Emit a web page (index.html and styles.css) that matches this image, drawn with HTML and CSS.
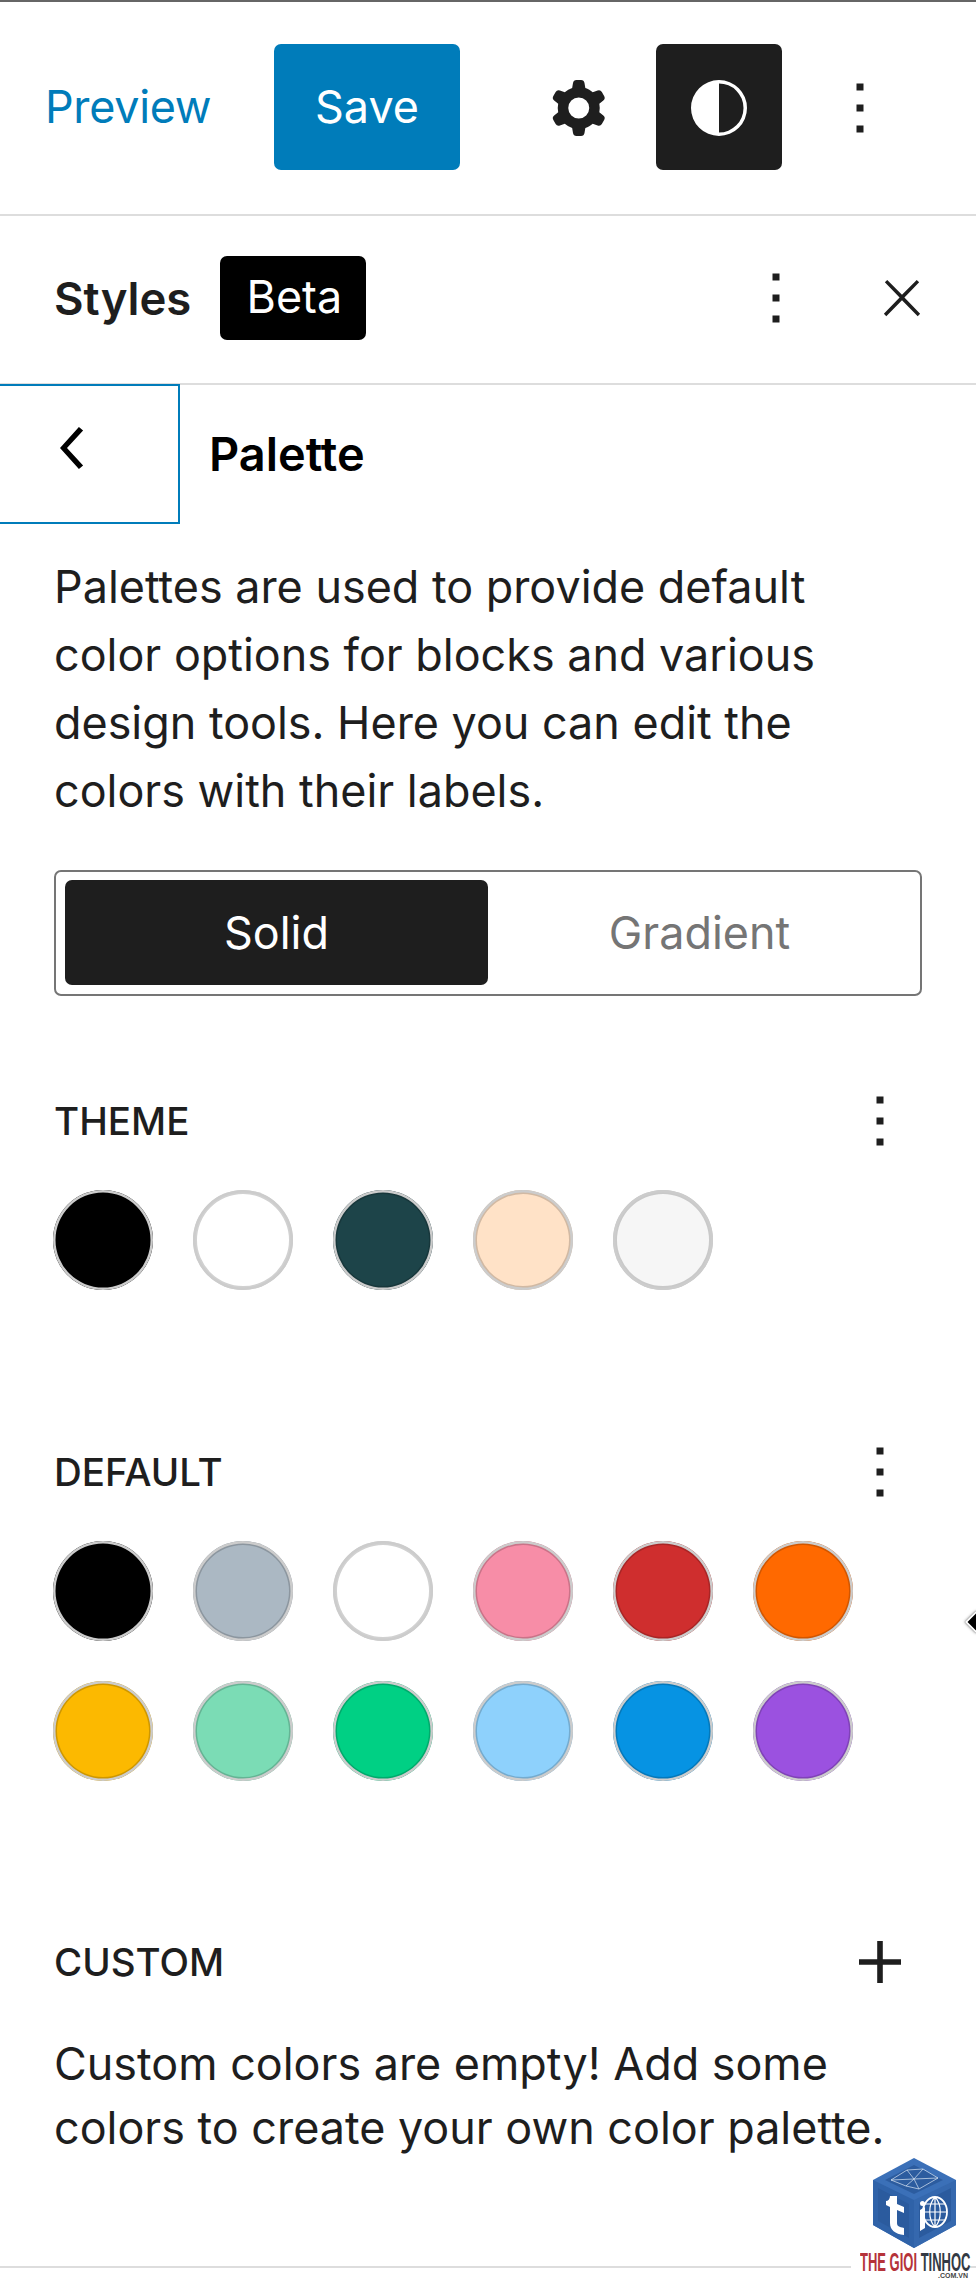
FILE: index.html
```html
<!DOCTYPE html>
<html lang="en">
<head>
<meta charset="utf-8">
<title>Palette</title>
<link rel="stylesheet" href="styles.css">
</head>
<body>
<div class="page">
  <header class="topbar">
    <a class="preview">Preview</a>
    <button class="save">Save</button>
    <span class="icon-btn gear"><svg viewBox="0 0 24 24" class="ic"><path fill-rule="evenodd" d="M10.289 4.836A1 1 0 0 1 11.275 4h1.306a1 1 0 0 1 .987.836l.244 1.466c.787.26 1.503.679 2.108 1.218l1.393-.522a1 1 0 0 1 1.216.437l.653 1.13a1 1 0 0 1-.23 1.273l-1.148.944a6.025 6.025 0 0 1 0 2.435l1.149.946a1 1 0 0 1 .23 1.272l-.653 1.13a1 1 0 0 1-1.216.437l-1.394-.522c-.605.54-1.32.958-2.108 1.218l-.244 1.466a1 1 0 0 1-.987.836h-1.306a1 1 0 0 1-.986-.836l-.244-1.466a5.995 5.995 0 0 1-2.108-1.218l-1.394.522a1 1 0 0 1-1.217-.436l-.653-1.131a1 1 0 0 1 .23-1.272l1.149-.946a6.026 6.026 0 0 1 0-2.435l-1.148-.944a1 1 0 0 1-.23-1.272l.653-1.131a1 1 0 0 1 1.217-.437l1.393.522a5.994 5.994 0 0 1 2.108-1.218l.244-1.466zM14.929 12a3 3 0 1 1-6 0 3 3 0 0 1 6 0z"/></svg></span>
    <span class="icon-btn styles-btn"><svg viewBox="0 0 24 24" class="ic"><path fill-rule="evenodd" d="M20 12a8 8 0 1 1-16 0 8 8 0 0 1 16 0Zm-1 0a7 7 0 0 1-7 7V5a7 7 0 0 1 7 7Z"/></svg></span>
    <span class="icon-btn more-top"><svg viewBox="0 0 24 24" class="ic"><path d="M13 19h-2v-2h2v2zm0-6h-2v-2h2v2zm0-6h-2V5h2v2z"/></svg></span>
  </header>

  <div class="sidebar-head">
    <strong class="sidebar-title">Styles</strong>
    <span class="beta">Beta</span>
    <span class="icon-btn more-head"><svg viewBox="0 0 24 24" class="ic"><path d="M13 19h-2v-2h2v2zm0-6h-2v-2h2v2zm0-6h-2V5h2v2z"/></svg></span>
    <span class="icon-btn close"><svg viewBox="0 0 24 24" class="ic ic-small"><path d="M13 11.8l6.1-6.3-1-1-6.1 6.2-6.1-6.2-1 1 6.1 6.3-6.5 6.7 1 1 6.5-6.6 6.5 6.6 1-1z"/></svg></span>
  </div>

  <div class="nav">
    <span class="back"><svg viewBox="0 0 24 24" class="ic"><path d="M14.6 7l-1.2-1L8 12l5.4 6 1.2-1-4.6-5z"/></svg></span>
    <h2 class="nav-title">Palette</h2>
  </div>

  <p class="intro">Palettes are used to provide default color options for blocks and various design tools. Here you can edit the colors with their labels.</p>

  <div class="segment">
    <span class="seg-item active">Solid</span>
    <span class="seg-item">Gradient</span>
  </div>

  <section class="group group-theme">
    <div class="group-head">
      <h3 class="label">Theme</h3>
      <span class="icon-btn"><svg viewBox="0 0 24 24" class="ic"><path d="M13 19h-2v-2h2v2zm0-6h-2v-2h2v2zm0-6h-2V5h2v2z"/></svg></span>
    </div>
    <div class="swatches">
      <span class="swatch c-black"></span>
      <span class="swatch c-white"></span>
      <span class="swatch c-teal"></span>
      <span class="swatch c-peach"></span>
      <span class="swatch c-smoke"></span>
    </div>
  </section>

  <section class="group group-default">
    <div class="group-head">
      <h3 class="label">Default</h3>
      <span class="icon-btn"><svg viewBox="0 0 24 24" class="ic"><path d="M13 19h-2v-2h2v2zm0-6h-2v-2h2v2zm0-6h-2V5h2v2z"/></svg></span>
    </div>
    <div class="swatches">
      <span class="swatch c-black"></span>
      <span class="swatch c-gray"></span>
      <span class="swatch c-white"></span>
      <span class="swatch c-pink"></span>
      <span class="swatch c-red"></span>
      <span class="swatch c-orange"></span>
      <span class="swatch c-amber"></span>
      <span class="swatch c-mint"></span>
      <span class="swatch c-green"></span>
      <span class="swatch c-sky"></span>
      <span class="swatch c-blue"></span>
      <span class="swatch c-purple"></span>
    </div>
  </section>

  <section class="group group-custom">
    <div class="group-head">
      <h3 class="label">Custom</h3>
      <span class="icon-btn"><svg viewBox="0 0 24 24" class="ic"><path d="M18 11.2h-5.2V6h-1.6v5.2H6v1.6h5.2V18h1.6v-5.2H18z"/></svg></span>
    </div>
    <p class="empty">Custom colors are empty! Add some colors to create your own color palette.</p>
  </section>

  <div class="foot-line"></div>

  <span class="cursor"></span>

  <div class="logo">
    <svg class="cube" viewBox="0 0 84 90">
      <path fill="#3b70b8" d="M41 0 83 22V67L41 90 0 67V22Z"/>
      <path fill="#3568ae" d="M41 42 83 22V67L41 90Z"/>
      <path fill="#2f62a8" d="M41 42 0 22V67L41 90Z"/>
      <path fill="#2c5c9f" d="M41 7 70 22 41 36 12 22Z"/>
      <path fill="#2b5b9e" d="M5 30 36 46V80L5 63Z"/>
      <path fill="#2b5b9e" d="M78 30 46 46V80L78 63Z"/>
      <path fill="none" stroke="#dbe7f4" stroke-width=".7" d="M18 22 34 12 50 11 65 20 46 31 33 28ZM34 12 41 21 33 28M50 11 41 21 46 31M18 22 41 21 65 20"/>
      <path fill="#fff" d="M17 38h7v8l7 3v6l-7-3v13c0 3 2 4 7 5v7c-9-1-14-5-14-12V49l-4-2v-4c2 0 4-2 4-5Z"/>
      <ellipse cx="62" cy="54" rx="12" ry="15" fill="none" stroke="#fff" stroke-width="1.8"/>
      <path fill="none" stroke="#fff" stroke-width="1.2" d="M62 39V69M50 54H74M52 46H72M52 62H72M62 39C55 46 55 62 62 69M62 39C69 46 69 62 62 69"/>
      <path fill="#fff" d="M47 52l5-3v21l-5 3ZM47 45.500a2.500 2.500 0 1 0 5 0 2.500 2.500 0 1 0-5 0Z"/>
    </svg>
    <div class="logo-text"><span class="logo-red">THE GIOI</span> <span class="logo-blue">TINHOC</span></div>
    <div class="logo-sub">.COM.VN</div>
  </div>
</div>
</body>
</html>
```
FILE: styles.css
```css
* { box-sizing: border-box; }
html, body { margin: 0; padding: 0; background: #fff; }
.page {
  position: relative;
  width: 976px;
  height: 2280px;
  overflow: hidden;
  font-family: Inter, "Liberation Sans", sans-serif;
  font-size: 44.9px;
  color: #1e1e1e;
}
.ic { display: block; width: 84px; height: 84px; fill: currentColor; }
.ic-small { width: 58px; height: 58px; }
.icon-btn { display: block; flex: none; }

.topbar {
  display: flex;
  align-items: center;
  height: 216px;
  border-top: 2px solid #666;
  border-bottom: 2px solid #ddd;
  padding: 0 0 2px 45px;
}
.preview { width: 229px; color: #007cba; letter-spacing: -.3px; }
.save {
  width: 186px;
  height: 126px;
  border: 0;
  border-radius: 7px;
  background: #007cba;
  color: #fff;
  font: inherit;
  padding: 0;
}
.gear { margin: 2px 0 0 77px; }
.styles-btn {
  display: flex;
  align-items: center;
  justify-content: center;
  width: 126px;
  height: 126px;
  margin-left: 35px;
  padding-top: 2px;
  border-radius: 7px;
  background: #1e1e1e;
  color: #fff;
}
.more-top { margin: 2px 0 0 36px; }

.sidebar-head {
  display: flex;
  align-items: center;
  height: 169px;
  border-bottom: 2px solid #ddd;
  padding: 0 0 3px 54px;
}
.sidebar-title { font-weight: 600; font-size: 45.5px; }
.beta {
  display: flex;
  align-items: center;
  justify-content: center;
  width: 146px;
  height: 84px;
  margin-left: 29px;
  padding: 0 0 2px 2px;
  border-radius: 7px;
  background: #000;
  color: #fff;
}
.more-head { margin-left: auto; }
.close { margin-left: 55px; margin-right: 45px; }

.nav { display: flex; align-items: center; height: 139px; }
.back {
  display: block;
  flex: none;
  align-self: flex-end;
  width: 180px;
  height: 140px;
  padding: 20px 0 0 32px;
  border: 2px solid #007cba;
  border-left: 0;
  color: #000;
}
.nav-title { margin: 0 0 2px 29px; font-size: 46.9px; font-weight: 600; color: #000; }

.intro {
  margin: 29px 0 0;
  padding: 0 54px;
  line-height: 68px;
}

.segment {
  display: flex;
  width: 868px;
  height: 126px;
  margin: 45px 0 0 54px;
  padding: 8px 9px 9px;
  border: 2px solid #757575;
  border-radius: 7px;
}
.seg-item {
  display: flex;
  align-items: center;
  justify-content: center;
  flex: 1;
  color: #757575;
}
.seg-item.active { background: #1e1e1e; border-radius: 7px; color: #fff; }

.group { padding: 0 0 0 54px; }
.group-theme { margin-top: 83px; }
.group-default { margin-top: 140px; }
.group-custom { margin-top: 139px; }
.group-head {
  display: flex;
  align-items: center;
  justify-content: space-between;
  width: 868px;
  height: 84px;
}
.label {
  margin: 0;
  font-size: 38.5px;
  font-weight: 500;
  text-transform: uppercase;
}
.swatches {
  display: grid;
  grid-template-columns: repeat(6, 100px);
  gap: 40px;
  margin: 27px 0 0 -1px;
}
.swatch {
  display: block;
  width: 100px;
  height: 100px;
  border-radius: 50%;
  box-shadow: inset 0 0 0 2.500px #ccc, inset 0 0 0 4px rgba(0,0,0,.18);
}
.c-black { background: #000; }
.c-white { background: #fff; }
.c-teal { background: #1d4449; }
.c-peach { background: #ffe2c7; }
.c-smoke { background: #f6f6f6; }
.c-gray { background: #abb8c3; }
.c-pink { background: #f78da7; }
.c-red { background: #cf2e2e; }
.c-orange { background: #ff6900; }
.c-amber { background: #fcb900; }
.c-mint { background: #7bdcb5; }
.c-green { background: #00d084; }
.c-sky { background: #8ed1fc; }
.c-blue { background: #0693e3; }
.c-purple { background: #9b51e0; }

.empty { margin: 28px 0 0; width: 868px; line-height: 64px; }

.foot-line {
  position: absolute;
  left: 0;
  right: 0;
  top: 2266px;
  height: 2px;
  background: #ddd;
}
.cursor {
  position: absolute;
  left: 968px;
  top: 1614px;
  width: 16px;
  height: 16px;
  background: #000;
  border: 2px solid #fff;
  transform: rotate(45deg);
  box-shadow: 0 0 3px rgba(0,0,0,.5);
}
.logo {
  position: absolute;
  left: 851px;
  top: 2150px;
  width: 118px;
  height: 130px;
  padding-top: 8px;
  background: #fff;
}
.cube { display: block; width: 84px; height: 90px; margin-left: 22px; }
.logo-text {
  width: 220px;
  height: 19px;
  margin: 5px 0 0 9px;
  transform: scaleX(.5);
  transform-origin: 0 0;
  font-family: "Liberation Sans", sans-serif;
  font-weight: 700;
  font-size: 26px;
  line-height: 19px;
  white-space: nowrap;
}
.logo-red { color: #b5333a; }
.logo-blue { color: #333a44; }
.logo-sub {
  padding-right: 1px;
  text-align: right;
  font: 700 7px/7px "Liberation Sans", sans-serif;
  color: #444;
}
```
